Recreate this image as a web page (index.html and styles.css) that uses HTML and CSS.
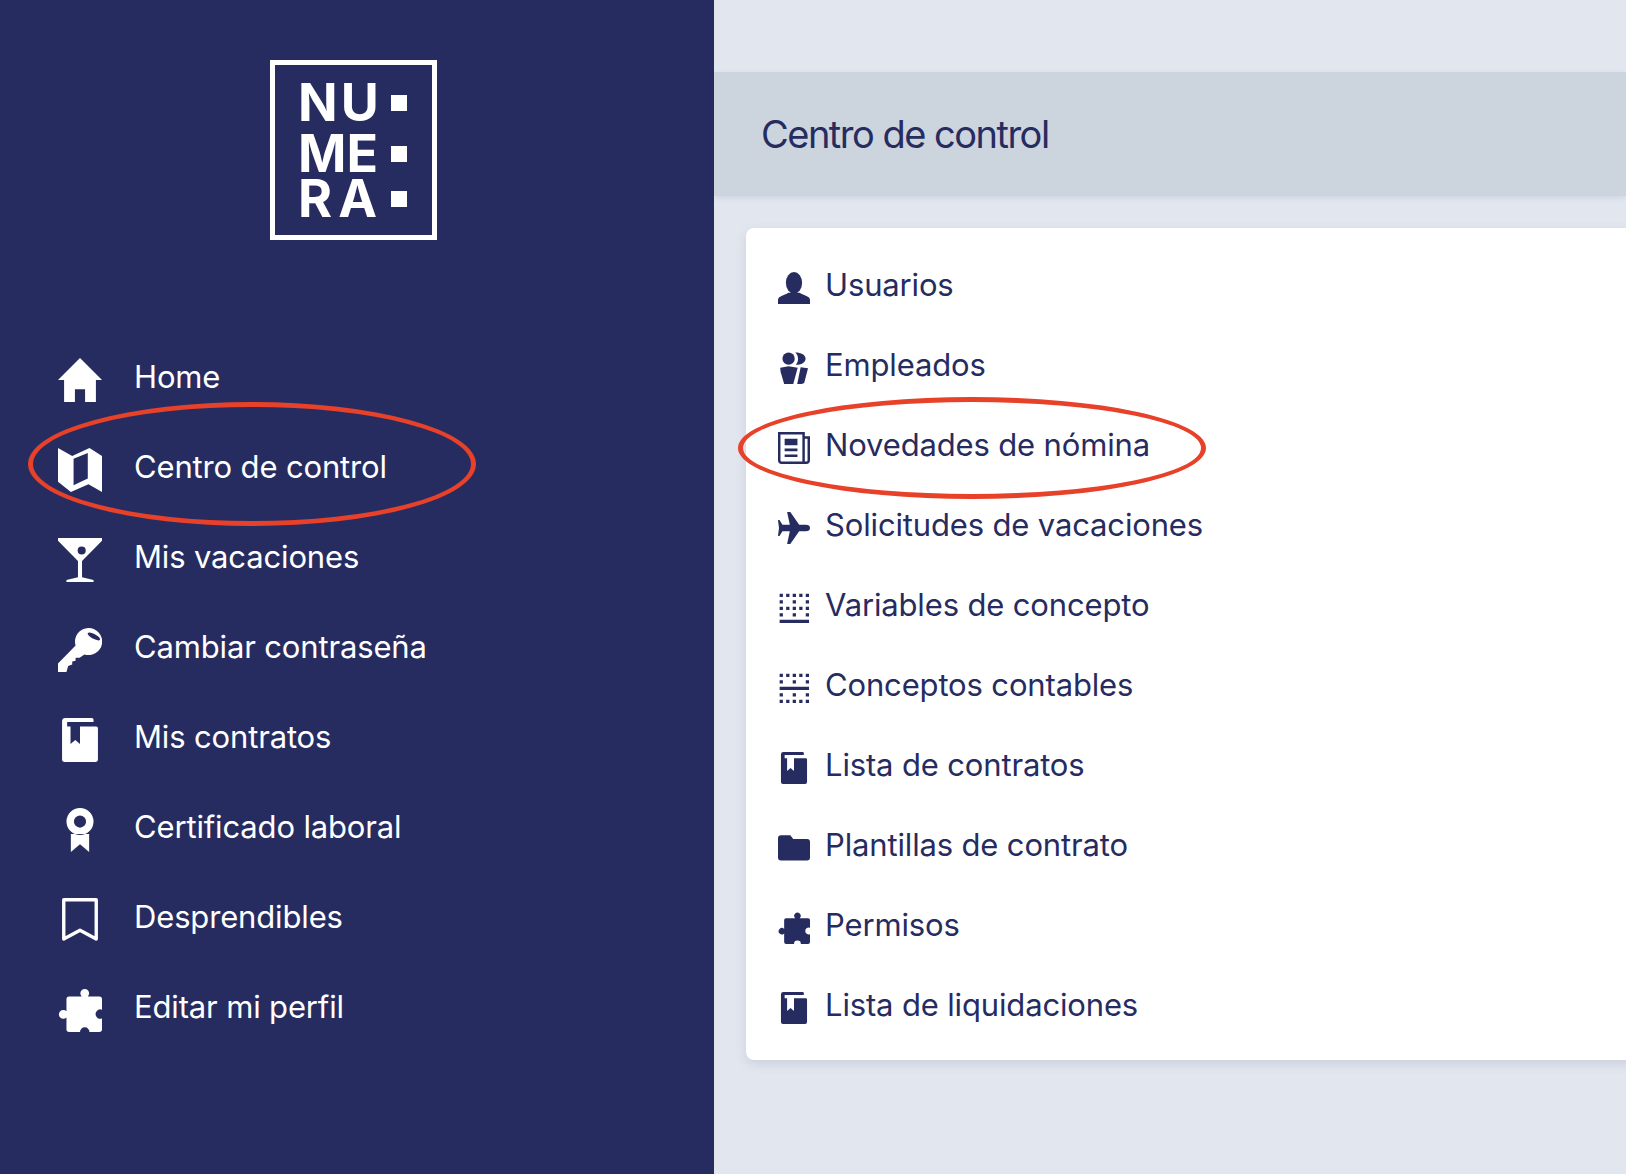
FILE: index.html
```html
<!DOCTYPE html>
<html lang="es">
<head>
  <meta charset="UTF-8" />
  <title>Centro de control - Numera</title>
  <link rel="stylesheet" href="styles.css">
</head>
<body>
  <svg class="icon-defs" aria-hidden="true">
    <symbol id="i-home" viewBox="0 0 130 130"><path d="M65 0 L130 65 H112 V130 H80 V92 H50 V130 H18 V65 H0 Z"/></symbol>
    <symbol id="i-map" viewBox="0 0 130 130"><path fill-rule="evenodd" d="M0 0 L42 24 L93 0 L130 24 V130 L90 107 L38 130 L0 100 Z M46 32 V110 L88 90 V15 Z"/></symbol>
    <symbol id="i-cocktail" viewBox="0 0 130 130"><path fill-rule="evenodd" d="M0 0 H130 V8 L71 68 V116 L105 124 V130 H25 V124 L59 116 V68 L0 8 Z M58 37 A12 12 0 1 0 82 37 A12 12 0 1 0 58 37 Z"/></symbol>
    <symbol id="i-key" viewBox="0 0 130 130"><path fill-rule="evenodd" d="M90 0 A40 40 0 1 1 78 78 L64 88 H52 V97 L42 99 V108 L30 112 L25 130 H0 V105 L52 52 A40 40 0 0 1 90 0 Z M88 15 C84 24 118 42 124 35 C128 26 94 8 88 15 Z"/></symbol>
    <symbol id="i-book" viewBox="0 0 130 130"><path d="M22 0 H100 Q105 0 105 5 V12 H27 V25 H37 V77 L51 65 L65 77 V25 H113 Q118 25 118 30 V122 Q118 130 110 130 H20 Q12 130 12 122 V10 Q12 0 22 0 Z"/></symbol>
    <symbol id="i-medal" viewBox="0 0 130 130"><path fill-rule="evenodd" d="M25 40 A40 40 0 1 1 105 40 A40 40 0 1 1 25 40 Z M47 40 A18 18 0 1 0 83 40 A18 18 0 1 0 47 40 Z M38 77 H92 V130 L65 107 L38 130 Z"/></symbol>
    <symbol id="i-bookmark" viewBox="0 0 130 130"><path fill="none" stroke="currentColor" stroke-width="10" stroke-linejoin="round" d="M17 5 H113 V121 L65 95 L17 121 Z"/></symbol>
    <symbol id="i-puzzle" viewBox="0 0 130 130"><path d="M33 25 H70 A13 13 0 1 1 88 25 H122 Q130 25 130 33 V64 A14 14 0 1 0 130 90 V122 Q130 130 122 130 H93 A14 14 0 1 0 65 130 H33 Q25 130 25 122 V87 A13 13 0 1 1 25 69 V33 Q25 25 33 25 Z"/></symbol>
    <symbol id="i-user" viewBox="0 0 130 130"><ellipse cx="65" cy="44" rx="33" ry="44"/><path d="M0 130 V113 C0 98 25 95 42 84 H88 C105 95 130 98 130 113 V130 Z"/></symbol>
    <symbol id="i-users" viewBox="0 0 130 130"><circle cx="43" cy="27" r="25"/><path d="M70 2 C95 2 112 12 112 27 C112 42 95 52 72 52 C85 40 85 15 70 2 Z"/><path d="M9 64 L43 58 L80 64 L62 130 H25 L15 95 Q9 80 9 64 Z"/><path d="M92 62 L122 66 L107 124 Q104 130 95 130 H78 Z"/></symbol>
    <symbol id="i-news" viewBox="0 0 130 130"><path fill="none" stroke="currentColor" stroke-width="10" d="M5 5 H104 V125 H15 Q5 125 5 115 Z M104 22 H125 V115 Q125 125 115 125 H104"/><path d="M27 27 H79 V54 H27 Z M27 67 H79 V78 H27 Z M27 91 H79 V102 H27 Z"/></symbol>
    <symbol id="i-plane" viewBox="0 0 130 130"><path d="M0 32 H6 L18 52 H48 L37 0 H50 L86 52 H112 Q130 52 130 65 Q130 78 112 78 H86 L50 130 H37 L48 78 H18 L6 98 H0 L4 65 Z"/></symbol>
    <symbol id="i-border-bottom" viewBox="2 2 19.6 19.6"><path d="M3 3h2v2H3z M7 3h2v2H7z M11 3h2v2h-2z M15 3h2v2h-2z M19 3h2v2h-2z M3 7h2v2H3z M11 7h2v2h-2z M19 7h2v2h-2z M3 11h2v2H3z M7 11h2v2H7z M11 11h2v2h-2z M15 11h2v2h-2z M19 11h2v2h-2z M3 15h2v2H3z M11 15h2v2h-2z M19 15h2v2h-2z M3 19h18v2H3z"/></symbol>
    <symbol id="i-border-middle" viewBox="2 2 19.6 19.6"><path d="M3 3h2v2H3z M7 3h2v2H7z M11 3h2v2h-2z M15 3h2v2h-2z M19 3h2v2h-2z M3 7h2v2H3z M11 7h2v2h-2z M19 7h2v2h-2z M3 11h18v2H3z M3 15h2v2H3z M11 15h2v2h-2z M19 15h2v2h-2z M3 19h2v2H3z M7 19h2v2H7z M11 19h2v2h-2z M15 19h2v2h-2z M19 19h2v2h-2z"/></symbol>
    <symbol id="i-folder" viewBox="0 0 130 130"><path d="M12 13 H50 L62 28 H118 Q130 28 130 40 V104 Q130 116 118 116 H12 Q0 116 0 104 V25 Q0 13 12 13 Z"/></symbol>
  </svg>

  <div class="layout">
    <aside class="sidebar">
      <div class="logo">
        <div class="logo-row logo-row-nu"><span>NU</span><i class="logo-dot"></i></div>
        <div class="logo-row logo-row-me"><span>ME</span><i class="logo-dot"></i></div>
        <div class="logo-row logo-row-ra"><span>RA</span><i class="logo-dot"></i></div>
      </div>
      <nav class="side-nav">
        <a href="#"><svg><use href="#i-home"/></svg>Home</a>
        <a href="#"><svg><use href="#i-map"/></svg>Centro de control<span class="ring ring-side"></span></a>
        <a href="#"><svg><use href="#i-cocktail"/></svg>Mis vacaciones</a>
        <a href="#"><svg><use href="#i-key"/></svg>Cambiar contraseña</a>
        <a href="#"><svg><use href="#i-book"/></svg>Mis contratos</a>
        <a href="#"><svg><use href="#i-medal"/></svg>Certificado laboral</a>
        <a href="#"><svg><use href="#i-bookmark"/></svg>Desprendibles</a>
        <a href="#"><svg><use href="#i-puzzle"/></svg>Editar mi perfil</a>
      </nav>
    </aside>

    <main class="content">
      <header class="page-header">
        <h1>Centro de control</h1>
      </header>
      <section class="card">
        <a href="#"><svg><use href="#i-user"/></svg>Usuarios</a>
        <a href="#"><svg><use href="#i-users"/></svg>Empleados</a>
        <a href="#"><svg><use href="#i-news"/></svg>Novedades de nómina<span class="ring ring-card"></span></a>
        <a href="#"><svg><use href="#i-plane"/></svg>Solicitudes de vacaciones</a>
        <a href="#"><svg><use href="#i-border-bottom"/></svg>Variables de concepto</a>
        <a href="#"><svg><use href="#i-border-middle"/></svg>Conceptos contables</a>
        <a href="#"><svg><use href="#i-book"/></svg>Lista de contratos</a>
        <a href="#"><svg><use href="#i-folder"/></svg>Plantillas de contrato</a>
        <a href="#"><svg><use href="#i-puzzle"/></svg>Permisos</a>
        <a href="#"><svg><use href="#i-book"/></svg>Lista de liquidaciones</a>
      </section>
    </main>
  </div>
</body>
</html>
```

FILE: styles.css
```css
html, body {
  height: 100%;
}
body {
  margin: 0;
  font-family: 'Inter', sans-serif;
  background-color: #e2e7ef;
  color: #272c60;
  overflow: hidden;
}
a {
  color: inherit;
  text-decoration: none;
}
.icon-defs {
  display: none;
}
.layout {
  display: flex;
  height: 1174px;
}
.sidebar {
  flex: 0 0 714px;
  box-sizing: border-box;
  padding: 60px 0 0 58px;
  background-color: #272c60;
  color: #fff;
}
.logo {
  box-sizing: border-box;
  width: 167px;
  height: 180px;
  margin-left: 212px;
  padding: 13px 0 0 23px;
  border: 5px solid #fff;
}
.logo-row {
  display: flex;
  align-items: center;
  gap: 13px;
  height: 50px;
  font-size: 52px;
  font-weight: 700;
  line-height: 50px;
  font-kerning: none;
}
.logo-row span {
  width: 80px;
  flex: none;
}
.logo-row-nu span {
  letter-spacing: 3px;
}
.logo-row-me {
  margin-top: 1px;
}
.logo-row-me span {
  letter-spacing: 0;
}
.logo-row-ra {
  margin-top: -5px;
}
.logo-row-ra span {
  letter-spacing: 6px;
}
.logo-dot {
  width: 16px;
  height: 16px;
  background-color: #fff;
}
.side-nav {
  display: flex;
  flex-direction: column;
  gap: 46px;
  margin-top: 118px;
}
.side-nav a {
  position: relative;
  display: flex;
  align-items: flex-start;
  gap: 32px;
  height: 44px;
  font-size: 31px;
  line-height: 37px;
  letter-spacing: -0.15px;
}
.side-nav svg {
  flex: none;
  width: 44px;
  height: 44px;
  fill: currentColor;
}
.content {
  flex: 1;
  min-width: 0;
  padding-top: 72px;
}
.page-header {
  display: flex;
  align-items: center;
  height: 124px;
  padding-left: 47px;
  background-color: #ccd4de;
  box-shadow: 0 2px 6px rgba(39, 44, 96, 0.1);
}
h1 {
  margin: 0;
  font-size: 38px;
  font-weight: 400;
  letter-spacing: -1.5px;
}
.card {
  display: flex;
  flex-direction: column;
  gap: 48px;
  height: 832px;
  box-sizing: border-box;
  margin: 32px -20px 0 32px;
  padding: 44px 0 0 32px;
  background-color: #fff;
  border-radius: 8px;
  box-shadow: 0 4px 12px rgba(39, 44, 96, 0.12);
}
.card a {
  position: relative;
  display: flex;
  align-items: flex-start;
  gap: 15px;
  height: 32px;
  font-size: 31px;
  line-height: 25px;
  letter-spacing: -0.15px;
}
.card svg {
  flex: none;
  width: 32px;
  height: 32px;
  fill: currentColor;
}
.ring {
  position: absolute;
  box-sizing: border-box;
  border: 5px solid #e8412a;
  border-radius: 50%;
}
.ring-side {
  top: -46px;
  left: -30px;
  width: 448px;
  height: 124px;
}
.ring-card {
  top: -35px;
  left: -40px;
  width: 468px;
  height: 102px;
}
```
